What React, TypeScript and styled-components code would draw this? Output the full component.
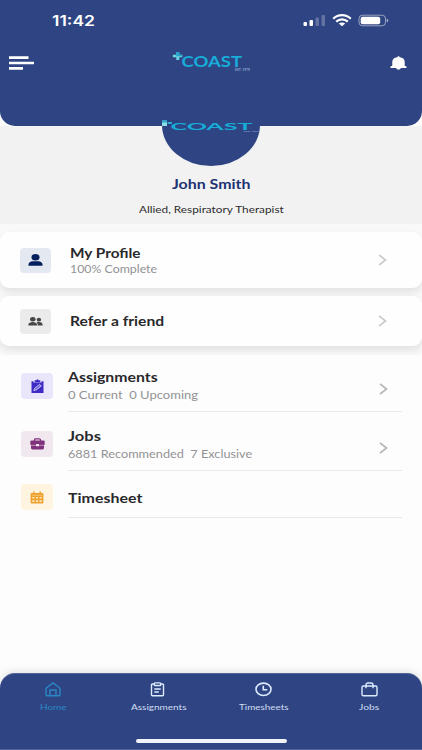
import React, { useLayoutEffect, useRef, useState } from "react";
import styled, { createGlobalStyle } from "styled-components";

const Global = createGlobalStyle`
  * { box-sizing: border-box; }
  body { margin: 0; background: #fdfdfd; font-family: Lato, "Open Sans", sans-serif; }
  svg { display: block; flex: none; }
`;

/* Line of text whose glyphs are widened to fill a given width */
const Line = styled.div<{ $w: number; $h: number }>`
  width: ${(p) => p.$w}px;
  height: ${(p) => p.$h}px;
  line-height: ${(p) => p.$h}px;
  display: flex;
  white-space: pre;
  flex: none;
`;
const Glyphs = styled.span<{ $size: number; $weight: number; $color: string; $font?: string }>`
  flex: none;
  transform-origin: 0 50%;
  font-family: ${(p) => p.$font ?? "Lato"}, sans-serif;
  font-size: ${(p) => p.$size}px;
  font-weight: ${(p) => p.$weight};
  color: ${(p) => p.$color};
`;

type WideProps = {
  width: number;
  height: number;
  size: number;
  color: string;
  weight?: number;
  font?: string;
  children: string;
};

function Wide({ width, height, size, color, weight = 400, font, children }: WideProps) {
  const ref = useRef<HTMLSpanElement>(null);
  const [scale, setScale] = useState(1);
  useLayoutEffect(() => {
    if (ref.current) setScale(width / ref.current.offsetWidth);
  }, [width, children]);
  return (
    <Line $w={width} $h={height}>
      <Glyphs ref={ref} $size={size} $weight={weight} $color={color} $font={font} style={{ transform: `scaleX(${scale})` }}>
        {children}
      </Glyphs>
    </Line>
  );
}

const Screen = styled.div`
  width: 422px;
  height: 750px;
  overflow: hidden;
  display: flex;
  flex-direction: column;
  background: #fdfdfd;
`;
const Header = styled.header`
  height: 126px;
  flex: none;
  background: #2f4583;
  border-radius: 0 0 15px 15px;
`;
const StatusBar = styled.div`
  height: 42px;
  padding: 0 33px 0 52px;
  display: flex;
  align-items: center;
  justify-content: space-between;
`;
const TopBar = styled.div`
  height: 42px;
  padding: 0 15px 0 9px;
  display: grid;
  grid-template-columns: 163px 1fr 17px;
  align-items: center;
`;
const Summary = styled.section`
  height: 98px;
  flex: none;
  background: #f2f2f2;
  display: flex;
  flex-direction: column;
  align-items: center;
`;
const Avatar = styled.div`
  width: 98px;
  height: 46px;
  margin-top: -6px;
  overflow: hidden;
`;
const NameRow = styled.div`
  margin-top: 10px;
`;
const RoleRow = styled.div`
  margin-top: 7px;
`;
const Cards = styled.section`
  height: 131px;
  flex: none;
  padding-top: 8px;
  background: #f9f9f9;
  display: flex;
  flex-direction: column;
  gap: 8px;
  overflow: hidden;
`;
const Card = styled.div<{ $h: number }>`
  height: ${(p) => p.$h}px;
  flex: none;
  padding: 0 35px 0 20px;
  display: flex;
  align-items: center;
  background: #fefefe;
  border-radius: 9px;
  box-shadow: 0 4px 9px rgba(0, 0, 0, 0.1);
`;
const Tile = styled.div<{ $bg: string; $w?: number; $h?: number }>`
  width: ${(p) => p.$w ?? 31}px;
  height: ${(p) => p.$h ?? 25}px;
  flex: none;
  border-radius: 4px;
  background: ${(p) => p.$bg};
  display: flex;
  align-items: center;
  justify-content: center;
`;
const Labels = styled.div<{ $top?: number }>`
  margin-left: 19px;
  padding-top: ${(p) => p.$top ?? 0}px;
  flex: 1;
`;
const Menu = styled.section`
  flex: 1;
`;
const Row = styled.div<{ $h: number; $top: number }>`
  height: ${(p) => p.$h}px;
  padding: 0 20px 0 21px;
  display: flex;
  & > :first-child { margin-top: ${(p) => p.$top}px; }
`;
const RowBody = styled.div<{ $top: number }>`
  margin-left: 15px;
  flex: 1;
  display: flex;
  justify-content: space-between;
  padding: ${(p) => p.$top}px 14px 0 0;
  border-bottom: 1px solid #e9e9ea;
`;
const RowArrow = styled.div`
  margin-top: 15px;
`;
const Dock = styled.nav`
  height: 77px;
  flex: none;
  background: #2f4583;
  border-radius: 15px 15px 0 0;
  border-top: 1px solid #50639a;
  border-bottom: 1px solid #50639a;
  box-shadow: 0 -2px 8px rgba(0, 0, 0, 0.1);
  display: flex;
  flex-direction: column;
  align-items: center;
`;
const Tabs = styled.div`
  width: 422px;
  height: 65px;
  padding-top: 8px;
  display: grid;
  grid-template-columns: repeat(4, 105.4px);
`;
const Tab = styled.div`
  display: flex;
  flex-direction: column;
  align-items: center;
  gap: 4px;
`;
const HomeBar = styled.div`
  width: 151px;
  height: 4px;
  border-radius: 2px;
  background: #f1f3fa;
`;

const LogoText = styled.text`
  font-family: Lato, sans-serif;
  font-weight: 700;
  fill: #17add9;
`;
const Est = styled.text`
  font-family: Lato, sans-serif;
  font-weight: 700;
  fill: #8aa5cf;
`;

const Logo = () => (
  <svg width="80" height="24" viewBox="0 0 80 24">
    <path d="M4.300 1h3v2.700h3v2.600h-3V9h-3V6.300H.8V3.700h3.500z" fill="#6fd3df" />
    <path d="M4.300 1h3v2.700h3v1.500h-6z" fill="#23a7cd" />
    <LogoText x="9.500" y="16" fontSize="14.500" textLength="60.500" lengthAdjust="spacingAndGlyphs">COAST</LogoText>
    <Est x="63" y="19.600" fontSize="3" textLength="15" lengthAdjust="spacingAndGlyphs">EST. 1979</Est>
  </svg>
);

const AvatarArt = () => (
  <svg width="98" height="46" viewBox="0 0 98 46">
    <ellipse cx="49" cy="5" rx="49" ry="41" fill="#2f4583" />
    <path d="M0 0h17v6H0z" fill="#29407e" />
    <path d="M0 .5h5V6H0z" fill="#8edee4" />
    <path d="M0 .5h5v2H0zM5.500 2H10v2H5.500z" fill="#2ba9ce" />
    <LogoText x="8.500" y="10" fontSize="10" textLength="82" lengthAdjust="spacingAndGlyphs">COAST</LogoText>
    <Est x="81.500" y="12.400" fontSize="2.500" textLength="17" lengthAdjust="spacingAndGlyphs">EST. 1979</Est>
  </svg>
);

const StatusIcons = () => (
  <svg width="86" height="14" viewBox="0 0 86 14">
    <g fill="#fff">
      <rect x="0.500" y="8" width="3.500" height="4" rx="1" />
      <rect x="6.500" y="6" width="3.500" height="6" rx="1" />
      <g opacity=".25">
        <rect x="12.500" y="3.500" width="3.500" height="8.500" rx="1" />
        <rect x="18.500" y="1" width="3.500" height="11" rx="1" />
      </g>
    </g>
    <g fill="none" stroke="#fff" strokeWidth="2.200">
      <path d="M30.200 4.700C35.300-.1 42.700-.1 47.800 4.700" />
      <path d="M33.200 7.600c3.400-3 8.200-3 11.600 0" />
    </g>
    <path d="M35.800 9.500c1.800-1.500 4.600-1.500 6.400 0L39 12.200z" fill="#fff" />
    <rect x="56" y="1.200" width="26.500" height="10.600" rx="3.500" fill="none" stroke="#fff" strokeOpacity=".5" />
    <rect x="57.700" y="2.800" width="19.500" height="7.500" rx="2" fill="#fff" />
    <path d="M83.700 4.700c2.200.5 2.200 3.100 0 3.600z" fill="#fff" opacity=".55" />
  </svg>
);
const Hamburger = () => (
  <svg width="26" height="16" viewBox="0 0 26 16" fill="#fff">
    <path d="M0 1.300h19.500v2.600H0zM0 6.700h25v2.600H0zM0 12.100h14v2.600H0z" />
  </svg>
);
const Bell = () => (
  <svg width="17" height="14" viewBox="0 0 17 14" fill="#fff">
    <path d="M7.300 1.300c0-1.500 2.400-1.500 2.400 0 3.800.5 5 2.400 5 5v3.500l1.800.7v1.500H10.700C10.700 14 6.300 14 6.300 12H.5v-1.500l1.800-.7V6.300c0-2.600 1.200-4.500 5-5z" />
  </svg>
);
const Chevron = ({ color = "#cacacb" }: { color?: string }) => (
  <svg width="9" height="12" viewBox="0 0 9 12">
    <path d="M1 .8L7.500 6 1 11.200" fill="none" stroke={color} strokeWidth="1.700" />
  </svg>
);
const Person = () => (
  <svg width="15" height="12" viewBox="0 0 15 12" fill="#05205f">
    <ellipse cx="7.500" cy="3.300" rx="4" ry="3.300" />
    <path d="M.5 11.700v-1.200C.5 8.500 2.500 7.500 4.500 7.300h6c2 .2 4 1.200 4 3.200v1.200z" />
  </svg>
);
const People = () => (
  <svg width="15" height="9" viewBox="0 0 15 9" fill="#474747">
    <ellipse cx="4.800" cy="2.300" rx="2.700" ry="2.200" />
    <path d="M.4 8.500V7.500C.4 4 9 4 9 7.500v1z" />
    <ellipse cx="10.900" cy="2.700" rx="2.200" ry="1.900" />
    <path d="M9.700 8.500c0-1.500-.3-2.500-1.200-3.200C11 4.500 14.600 5 14.600 7.500v1z" />
  </svg>
);
const ClipboardPen = () => (
  <svg width="13" height="15" viewBox="0 0 13 15">
    <path d="M.5 2.200h2V3.500h8V2.200h2V14H.5z" fill="#3e2bc5" />
    <path d="M3.700 1.200h1.800c.2-1.200 1.800-1.200 2 0h1.800v2.100H3.700z" fill="#3e2bc5" />
    <path d="M2.800 11.500l1-2.300L8.500 5.400l1.800 1.500-4.800 3.900z" fill="#8e84e0" stroke="#d9d5ff" strokeWidth=".8" />
    <path d="M4 10.200l4.500-3.500" stroke="#3e2bc5" strokeWidth=".5" />
  </svg>
);
const Briefcase = () => (
  <svg width="15" height="12" viewBox="0 0 15 12">
    <path d="M4.500 3V1.800Q4.500.8 5.600.8h3.800q1.100 0 1.100 1V3" fill="none" stroke="#80317b" strokeWidth="1.200" />
    <rect x=".3" y="2.600" width="14.400" height="4.600" rx="1.200" fill="#80317b" />
    <path d="M1 7.500h13v2.600q0 1.400-1.400 1.400H2.400Q1 11.500 1 10.100z" fill="#80317b" />
    <path d="M.8 7.200h13.400" stroke="#bd92ba" strokeWidth=".6" />
    <rect x="6" y="6" width="3" height="2.300" rx=".6" fill="#f5e9f3" />
  </svg>
);
const Calendar = () => (
  <svg width="14" height="13" viewBox="0 0 14 13">
    <path d="M3.800.5v3M10.200.5v3" stroke="#eda12e" strokeWidth="1.500" />
    <rect x=".6" y="1.900" width="12.800" height="10.600" rx="1.200" fill="#eda12e" />
    <path d="M1.800 4.300h10.400" stroke="#fbd899" strokeWidth=".6" />
    <path d="M2.200 5.900h2.300v1.700H2.200zM5.900 5.900h2.300v1.700H5.900zM9.500 5.900h2.300v1.700H9.500zM2.200 9.200h2.300v1.700H2.200zM5.900 9.200h2.300v1.700H5.900zM9.500 9.200h2.300v1.700H9.500z" fill="#ffe6b6" />
  </svg>
);

const tabIcon = { width: 18, height: 15, viewBox: "0 0 18 15", fill: "none", strokeWidth: 1.4 };
const HomeIcon = () => (
  <svg {...tabIcon} stroke="#2b86c4">
    <path d="M2 6.300L9 1l7 5.300v6.400q0 1-1 1H3q-1 0-1-1zM6 13.700V8h6v5.700" />
  </svg>
);
const ClipIcon = () => (
  <svg {...tabIcon} stroke="#dcebff">
    <path d="M5.500 2H3.500Q2.500 2 2.500 3v9.700q0 1 1 1h10q1 0 1-1V3q0-1-1-1h-2M5.300 7h6.400M5.300 10h4.500" />
    <rect x="5.300" y=".9" width="6.400" height="2.600" rx=".8" />
  </svg>
);
const ClockIcon = () => (
  <svg {...tabIcon} stroke="#dcebff" strokeWidth={1.600}>
    <ellipse cx="9.500" cy="7.300" rx="7.500" ry="6.200" />
    <path d="M9.300 3.700v4h4" />
  </svg>
);
const CaseIcon = () => (
  <svg {...tabIcon} stroke="#dcebff">
    <rect x="2" y="4" width="15" height="9.700" rx="1.300" />
    <path d="M6 6.300V3q0-2 2-2h3q2 0 2 2v3.300" />
  </svg>
);

const tabs = [
  { label: "Home", width: 26, color: "#2b86c4", Icon: HomeIcon },
  { label: "Assignments", width: 55, color: "#d1ddf2", Icon: ClipIcon },
  { label: "Timesheets", width: 49.5, color: "#d1ddf2", Icon: ClockIcon },
  { label: "Jobs", width: 20.5, color: "#d1ddf2", Icon: CaseIcon },
];

const ink = "#29292b";
const muted = "#939395";

export default function App() {
  return (
    <Screen>
      <Global />
      <Header>
        <StatusBar>
          <Wide width={43.5} height={16} size={14.5} weight={600} font="Inter" color="#fff">11:42</Wide>
          <StatusIcons />
        </StatusBar>
        <TopBar>
          <Hamburger />
          <Logo />
          <Bell />
        </TopBar>
      </Header>
      <Summary>
        <Avatar><AvatarArt /></Avatar>
        <NameRow><Wide width={79} height={18} size={12.5} weight={700} color="#1d3273">John Smith</Wide></NameRow>
        <RoleRow><Wide width={145} height={16} size={10} color="#2c2c2e">Allied, Respiratory Therapist</Wide></RoleRow>
      </Summary>
      <Cards>
        <Card $h={56}>
          <Tile $bg="#e4e8f0"><Person /></Tile>
          <Labels $top={2}>
            <Wide width={70} height={17} size={12.5} weight={700} color={ink}>My Profile</Wide>
            <Wide width={87} height={15} size={10.5} color={muted}>100% Complete</Wide>
          </Labels>
          <Chevron />
        </Card>
        <Card $h={50}>
          <Tile $bg="#ebebec"><People /></Tile>
          <Labels>
            <Wide width={94} height={17} size={12.5} weight={700} color={ink}>Refer a friend</Wide>
          </Labels>
          <Chevron />
        </Card>
      </Cards>
      <Menu>
        <Row $h={57} $top={18}>
          <Tile $bg="#e9e6fb" $w={32} $h={26}><ClipboardPen /></Tile>
          <RowBody $top={13}>
            <div>
              <Wide width={90} height={20} size={12.5} weight={700} color={ink}>Assignments</Wide>
              <Wide width={130} height={15} size={10.5} color={muted}>{"0 Current  0 Upcoming"}</Wide>
            </div>
            <RowArrow><Chevron color="#b5b5b6" /></RowArrow>
          </RowBody>
        </Row>
        <Row $h={59} $top={19}>
          <Tile $bg="#f1e7ef" $w={32} $h={26}><Briefcase /></Tile>
          <RowBody $top={14.6}>
            <div>
              <Wide width={33} height={20} size={12.5} weight={700} color={ink}>Jobs</Wide>
              <Wide width={184} height={15} size={10.5} color={muted}>{"6881 Recommended  7 Exclusive"}</Wide>
            </div>
            <RowArrow><Chevron color="#b5b5b6" /></RowArrow>
          </RowBody>
        </Row>
        <Row $h={47} $top={13}>
          <Tile $bg="#fff4df" $w={32} $h={26}><Calendar /></Tile>
          <RowBody $top={18}>
            <Wide width={74} height={20} size={12.5} weight={700} color={ink}>Timesheet</Wide>
          </RowBody>
        </Row>
      </Menu>
      <Dock>
        <Tabs>
          {tabs.map(({ label, width, color, Icon }) => (
            <Tab key={label}>
              <Icon />
              <Wide width={width} height={12} size={8} color={color}>{label}</Wide>
            </Tab>
          ))}
        </Tabs>
        <HomeBar />
      </Dock>
    </Screen>
  );
}
